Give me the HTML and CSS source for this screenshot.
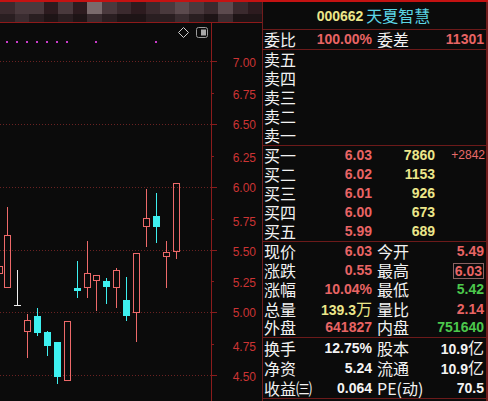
FILE: index.html
```html
<!DOCTYPE html>
<html lang="zh-CN">
<head>
<meta charset="utf-8">
<title>000662 天夏智慧</title>
<link rel="stylesheet" href="styles.css">
</head>
<body>
<div class="page">
  <div class="chart-col">
    <div class="mosaic">
      <div class="mrow r1">
        <span class="s2"></span><span class="s3"></span><span class="s3"></span><span class="s1"></span><span class="s3"></span><span class="s1"></span><span class="s5"></span><span class="s3"></span><span class="s2"></span><span class="s1"></span><span class="s2"></span><span class="s3"></span><span class="s4"></span><span class="s3"></span><span class="s2"></span><span class="s4"></span><span class="s2"></span><span class="s1"></span>
      </div>
      <div class="mrow r2">
        <span class="d2"></span><span class="d3"></span><span class="d2"></span><span class="d1"></span><span class="d2"></span><span class="d1"></span><span class="d3"></span><span class="d2"></span><span class="d1"></span><span class="d1"></span><span class="d2"></span><span class="d2"></span><span class="d3"></span><span class="d2"></span><span class="d1"></span><span class="d3"></span><span class="d1"></span><span class="d1"></span>
      </div>
    </div>
    <svg class="chart" width="262" height="378" viewBox="0 23 262 378" xmlns="http://www.w3.org/2000/svg">
      <g class="grid">
        <line x1="0" y1="61.5" x2="211" y2="61.5"/>
        <line x1="0" y1="124.5" x2="211" y2="124.5"/>
        <line x1="0" y1="187.5" x2="211" y2="187.5"/>
        <line x1="0" y1="250.5" x2="211" y2="250.5"/>
        <line x1="0" y1="312.5" x2="211" y2="312.5"/>
        <line x1="0" y1="375.5" x2="211" y2="375.5"/>
      </g>
      <line class="axis" x1="211.5" y1="23" x2="211.5" y2="401"/>
      <g class="ticks">
        <line x1="211" y1="61.5" x2="217" y2="61.5"/>
        <line x1="211" y1="93.5" x2="214" y2="93.5"/>
        <line x1="211" y1="124.5" x2="217" y2="124.5"/>
        <line x1="211" y1="156.5" x2="214" y2="156.5"/>
        <line x1="211" y1="187.5" x2="217" y2="187.5"/>
        <line x1="211" y1="219.5" x2="214" y2="219.5"/>
        <line x1="211" y1="250.5" x2="217" y2="250.5"/>
        <line x1="211" y1="281.5" x2="214" y2="281.5"/>
        <line x1="211" y1="312.5" x2="217" y2="312.5"/>
        <line x1="211" y1="344.5" x2="214" y2="344.5"/>
        <line x1="211" y1="375.5" x2="217" y2="375.5"/>
      </g>
      <g class="ylabels">
        <text x="256" y="67">7.00</text>
        <text x="256" y="99">6.75</text>
        <text x="256" y="129">6.50</text>
        <text x="256" y="161.5">6.25</text>
        <text x="256" y="192">6.00</text>
        <text x="256" y="225.5">5.75</text>
        <text x="256" y="255.5">5.50</text>
        <text x="256" y="287">5.25</text>
        <text x="256" y="317">5.00</text>
        <text x="256" y="350.5">4.75</text>
        <text x="256" y="380.5">4.50</text>
      </g>
      <g class="dots">
        <rect x="6" y="41" width="2" height="2"/>
        <rect x="16" y="41" width="2" height="2"/>
        <rect x="26" y="41" width="2" height="2"/>
        <rect x="36" y="41" width="2" height="2"/>
        <rect x="46" y="41" width="2" height="2"/>
        <rect x="56" y="41" width="2" height="2"/>
        <rect x="66" y="41" width="2" height="2"/>
        <rect x="95" y="41" width="2" height="2"/>
        <rect x="155" y="41" width="2" height="2"/>
      </g>
      <g class="icons">
        <path class="ico" d="M183.5 27.5 L188.5 32.5 L183.5 37.5 L178.5 32.5 Z"/>
        <rect class="ico2" x="196.5" y="27.5" width="11" height="10" rx="2"/>
        <rect class="ico2f" x="201" y="29.5" width="5" height="6"/>
      </g>
      <g class="up">
        <rect x="-3.5" y="266.5" width="6" height="7"/>
        <rect x="4.5" y="235.5" width="6" height="52"/>
        <line x1="7.5" y1="207" x2="7.5" y2="235"/>
        <rect x="24.5" y="320.5" width="6" height="11"/>
        <line x1="27.5" y1="314" x2="27.5" y2="320"/>
        <line x1="27.5" y1="332" x2="27.5" y2="358"/>
        <rect x="64.5" y="321.5" width="6" height="59"/>
        <rect x="84.5" y="273.5" width="6" height="14"/>
        <line x1="87.5" y1="241" x2="87.5" y2="273"/>
        <line x1="87.5" y1="288" x2="87.5" y2="298"/>
        <rect x="93.5" y="275.5" width="6" height="5"/>
        <line x1="96.5" y1="281" x2="96.5" y2="311"/>
        <rect x="113.5" y="270.5" width="6" height="17"/>
        <line x1="116.5" y1="268" x2="116.5" y2="270"/>
        <line x1="116.5" y1="288" x2="116.5" y2="308"/>
        <rect x="133.5" y="253.5" width="6" height="59"/>
        <line x1="136.5" y1="313" x2="136.5" y2="342"/>
        <rect x="143.5" y="218.5" width="6" height="8"/>
        <line x1="146.5" y1="189" x2="146.5" y2="218"/>
        <line x1="146.5" y1="227" x2="146.5" y2="247"/>
        <rect x="163.5" y="252.5" width="6" height="4"/>
        <line x1="166.5" y1="241" x2="166.5" y2="252"/>
        <line x1="166.5" y1="257" x2="166.5" y2="288"/>
        <rect x="173.5" y="183.5" width="6" height="68"/>
        <line x1="176.5" y1="252" x2="176.5" y2="259"/>
      </g>
      <g class="down">
        <line x1="37.5" y1="308" x2="37.5" y2="336"/>
        <rect x="34" y="316" width="7" height="17"/>
        <line x1="47.5" y1="331" x2="47.5" y2="356"/>
        <rect x="44" y="332" width="7" height="14"/>
        <line x1="57.5" y1="342" x2="57.5" y2="384"/>
        <rect x="54" y="342" width="7" height="35"/>
        <line x1="77.5" y1="261" x2="77.5" y2="298"/>
        <rect x="74" y="288" width="7" height="3"/>
        <line x1="106.5" y1="278" x2="106.5" y2="304"/>
        <rect x="103" y="281" width="7" height="6"/>
        <line x1="126.5" y1="277" x2="126.5" y2="321"/>
        <rect x="123" y="300" width="7" height="16"/>
        <line x1="156.5" y1="193" x2="156.5" y2="243"/>
        <rect x="153" y="216" width="7" height="11"/>
      </g>
      <g class="doji">
        <line x1="17.5" y1="270" x2="17.5" y2="305"/>
        <line x1="14" y1="305.5" x2="21" y2="305.5"/>
      </g>
    </svg>
  </div>

  <div class="panel">
    <div class="title"><span class="code">000662</span><span class="name">天夏智慧</span></div>

    <div class="sec">
      <div class="row info"><span class="lbl">委比</span><span class="val red">100.00%</span><span class="lbl2">委差</span><span class="val red">11301</span></div>
    </div>

    <div class="sec">
      <div class="row ob"><span class="lbl">卖五</span><span class="val"></span><span class="val"></span><span class="chg"></span></div>
      <div class="row ob"><span class="lbl">卖四</span><span class="val"></span><span class="val"></span><span class="chg"></span></div>
      <div class="row ob"><span class="lbl">卖三</span><span class="val"></span><span class="val"></span><span class="chg"></span></div>
      <div class="row ob"><span class="lbl">卖二</span><span class="val"></span><span class="val"></span><span class="chg"></span></div>
      <div class="row ob"><span class="lbl">卖一</span><span class="val"></span><span class="val"></span><span class="chg"></span></div>
    </div>

    <div class="sec">
      <div class="row ob"><span class="lbl">买一</span><span class="val red">6.03</span><span class="val yel">7860</span><span class="chg">+2842</span></div>
      <div class="row ob"><span class="lbl">买二</span><span class="val red">6.02</span><span class="val yel">1153</span><span class="chg"></span></div>
      <div class="row ob"><span class="lbl">买三</span><span class="val red">6.01</span><span class="val yel">926</span><span class="chg"></span></div>
      <div class="row ob"><span class="lbl">买四</span><span class="val red">6.00</span><span class="val yel">673</span><span class="chg"></span></div>
      <div class="row ob"><span class="lbl">买五</span><span class="val red">5.99</span><span class="val yel">689</span><span class="chg"></span></div>
    </div>

    <div class="sec">
      <div class="row info"><span class="lbl">现价</span><span class="val red">6.03</span><span class="lbl2">今开</span><span class="val red">5.49</span></div>
      <div class="row info"><span class="lbl">涨跌</span><span class="val red">0.55</span><span class="lbl2">最高</span><span class="val red"><span class="boxed">6.03</span></span></div>
      <div class="row info"><span class="lbl">涨幅</span><span class="val red">10.04%</span><span class="lbl2">最低</span><span class="val grn">5.42</span></div>
      <div class="row info"><span class="lbl">总量</span><span class="val yel">139.3<span class="cjk">万</span></span><span class="lbl2">量比</span><span class="val red">2.14</span></div>
      <div class="row info"><span class="lbl">外盘</span><span class="val red">641827</span><span class="lbl2">内盘</span><span class="val grn">751640</span></div>
    </div>

    <div class="sec last">
      <div class="row info"><span class="lbl">换手</span><span class="val wht">12.75%</span><span class="lbl2">股本</span><span class="val wht">10.9<span class="cjk">亿</span></span></div>
      <div class="row info"><span class="lbl">净资</span><span class="val wht">5.24</span><span class="lbl2">流通</span><span class="val wht">10.9<span class="cjk">亿</span></span></div>
      <div class="row info"><span class="lbl">收益㈢</span><span class="val wht">0.064</span><span class="lbl2">PE(动)</span><span class="val wht">70.5</span></div>
    </div>
  </div>
</div>
</body>
</html>
```

FILE: styles.css
```css
* {
  box-sizing: border-box;
  margin: 0;
  padding: 0;
}

html,
body {
  background: #0b0b0b;
}

body {
  width: 488px;
  height: 401px;
  overflow: hidden;
  font-family: "Noto Sans CJK SC", "Liberation Sans", sans-serif;
  color: #f2f2f2;
}

.page {
  display: flex;
  width: 488px;
  height: 401px;
  border-top: 2px solid #c41212;
  background: #0b0b0b;
}

/* ---------- chart column ---------- */
.chart-col {
  width: 262px;
  display: flex;
  flex-direction: column;
}

.mosaic {
  height: 21px;
  border-bottom: 1px solid #8e1a1a;
  display: flex;
  flex-direction: column;
}

.mrow {
  display: flex;
}

.mrow.r1 {
  height: 12px;
}

.mrow.r2 {
  height: 8px;
}

.mrow span {
  flex: 1;
}

.s1 { background: #2d1b1f; }
.s2 { background: #3b2a2e; }
.s3 { background: #4a393d; }
.s4 { background: #5c4a4e; }
.s5 { background: #7a6a6c; }
.d1 { background: #1e1416; }
.d2 { background: #2a1e21; }
.d3 { background: #3a2c30; }

.chart {
  display: block;
}

.grid line {
  stroke: #6a2222;
  stroke-width: 1;
  stroke-dasharray: 1 2;
}

.axis {
  stroke: #8a1c1c;
  stroke-width: 1;
}

.ticks line {
  stroke: #8a1c1c;
  stroke-width: 1;
}

.ylabels text {
  fill: #cc3434;
  font-family: "Liberation Sans", Arial, sans-serif;
  font-size: 12px;
  text-anchor: end;
}

.dots rect {
  fill: #c83cc8;
}

.ico {
  fill: none;
  stroke: #d0d0d0;
  stroke-width: 1;
}

.ico2 {
  fill: none;
  stroke: #9c9c9c;
  stroke-width: 1;
}

.ico2f {
  fill: #a8a8a8;
}

.up rect {
  fill: none;
  stroke: #ee6a6a;
  stroke-width: 1;
}

.up line {
  stroke: #ee6a6a;
  stroke-width: 1;
}

.down rect {
  fill: #3ef0f0;
}

.down line {
  stroke: #3ef0f0;
  stroke-width: 1;
}

.doji line {
  stroke: #f0f0f0;
  stroke-width: 1;
}

/* ---------- quote panel ---------- */
.panel {
  width: 226px;
  border-left: 1px solid #701c1c;
  border-right: 2px solid #701c1c;
  display: flex;
  flex-direction: column;
}

.title {
  height: 28px;
  border-bottom: 1px solid #6c1a1a;
  display: flex;
  justify-content: center;
  align-items: center;
  gap: 3px;
  padding-right: 2px;
}

.code {
  font-family: "Liberation Sans", Arial, sans-serif;
  font-weight: bold;
  font-size: 14px;
  color: #ece68a;
}

.name {
  font-size: 16px;
  line-height: 19px;
  color: #5cd6e6;
}

.sec {
  border-bottom: 1px solid #6c1a1a;
}

.row {
  height: 19px;
  display: grid;
  align-items: center;
  white-space: nowrap;
}

.sec.last .row {
  height: 20px;
}

.row.ob {
  grid-template-columns: 40px 69px 63px 1fr;
  padding-right: 1px;
}

.row.info {
  grid-template-columns: 40px 69px 1fr auto;
  padding-right: 2px;
}

.lbl,
.lbl2 {
  font-size: 16px;
  line-height: 19px;
  color: #f2f2f2;
  padding-left: 1px;
}

.lbl2 {
  padding-left: 5px;
}

.val {
  font-family: "Liberation Sans", Arial, sans-serif;
  font-weight: bold;
  font-size: 14px;
  line-height: 19px;
  text-align: right;
}

.chg {
  font-family: "Liberation Sans", Arial, sans-serif;
  font-size: 12px;
  line-height: 19px;
  text-align: right;
  color: #e86a6a;
}

.cjk {
  font-family: "Noto Sans CJK SC", sans-serif;
  font-weight: normal;
  font-size: 16px;
}

.red { color: #e86464; }
.yel { color: #ece68a; }
.grn { color: #4cc84c; }
.wht { color: #f4f4f4; }

.boxed {
  display: inline-block;
  line-height: 14px;
  border: 1px solid #8a6262;
  padding: 0 1px 0 1px;
  vertical-align: middle;
}
```
